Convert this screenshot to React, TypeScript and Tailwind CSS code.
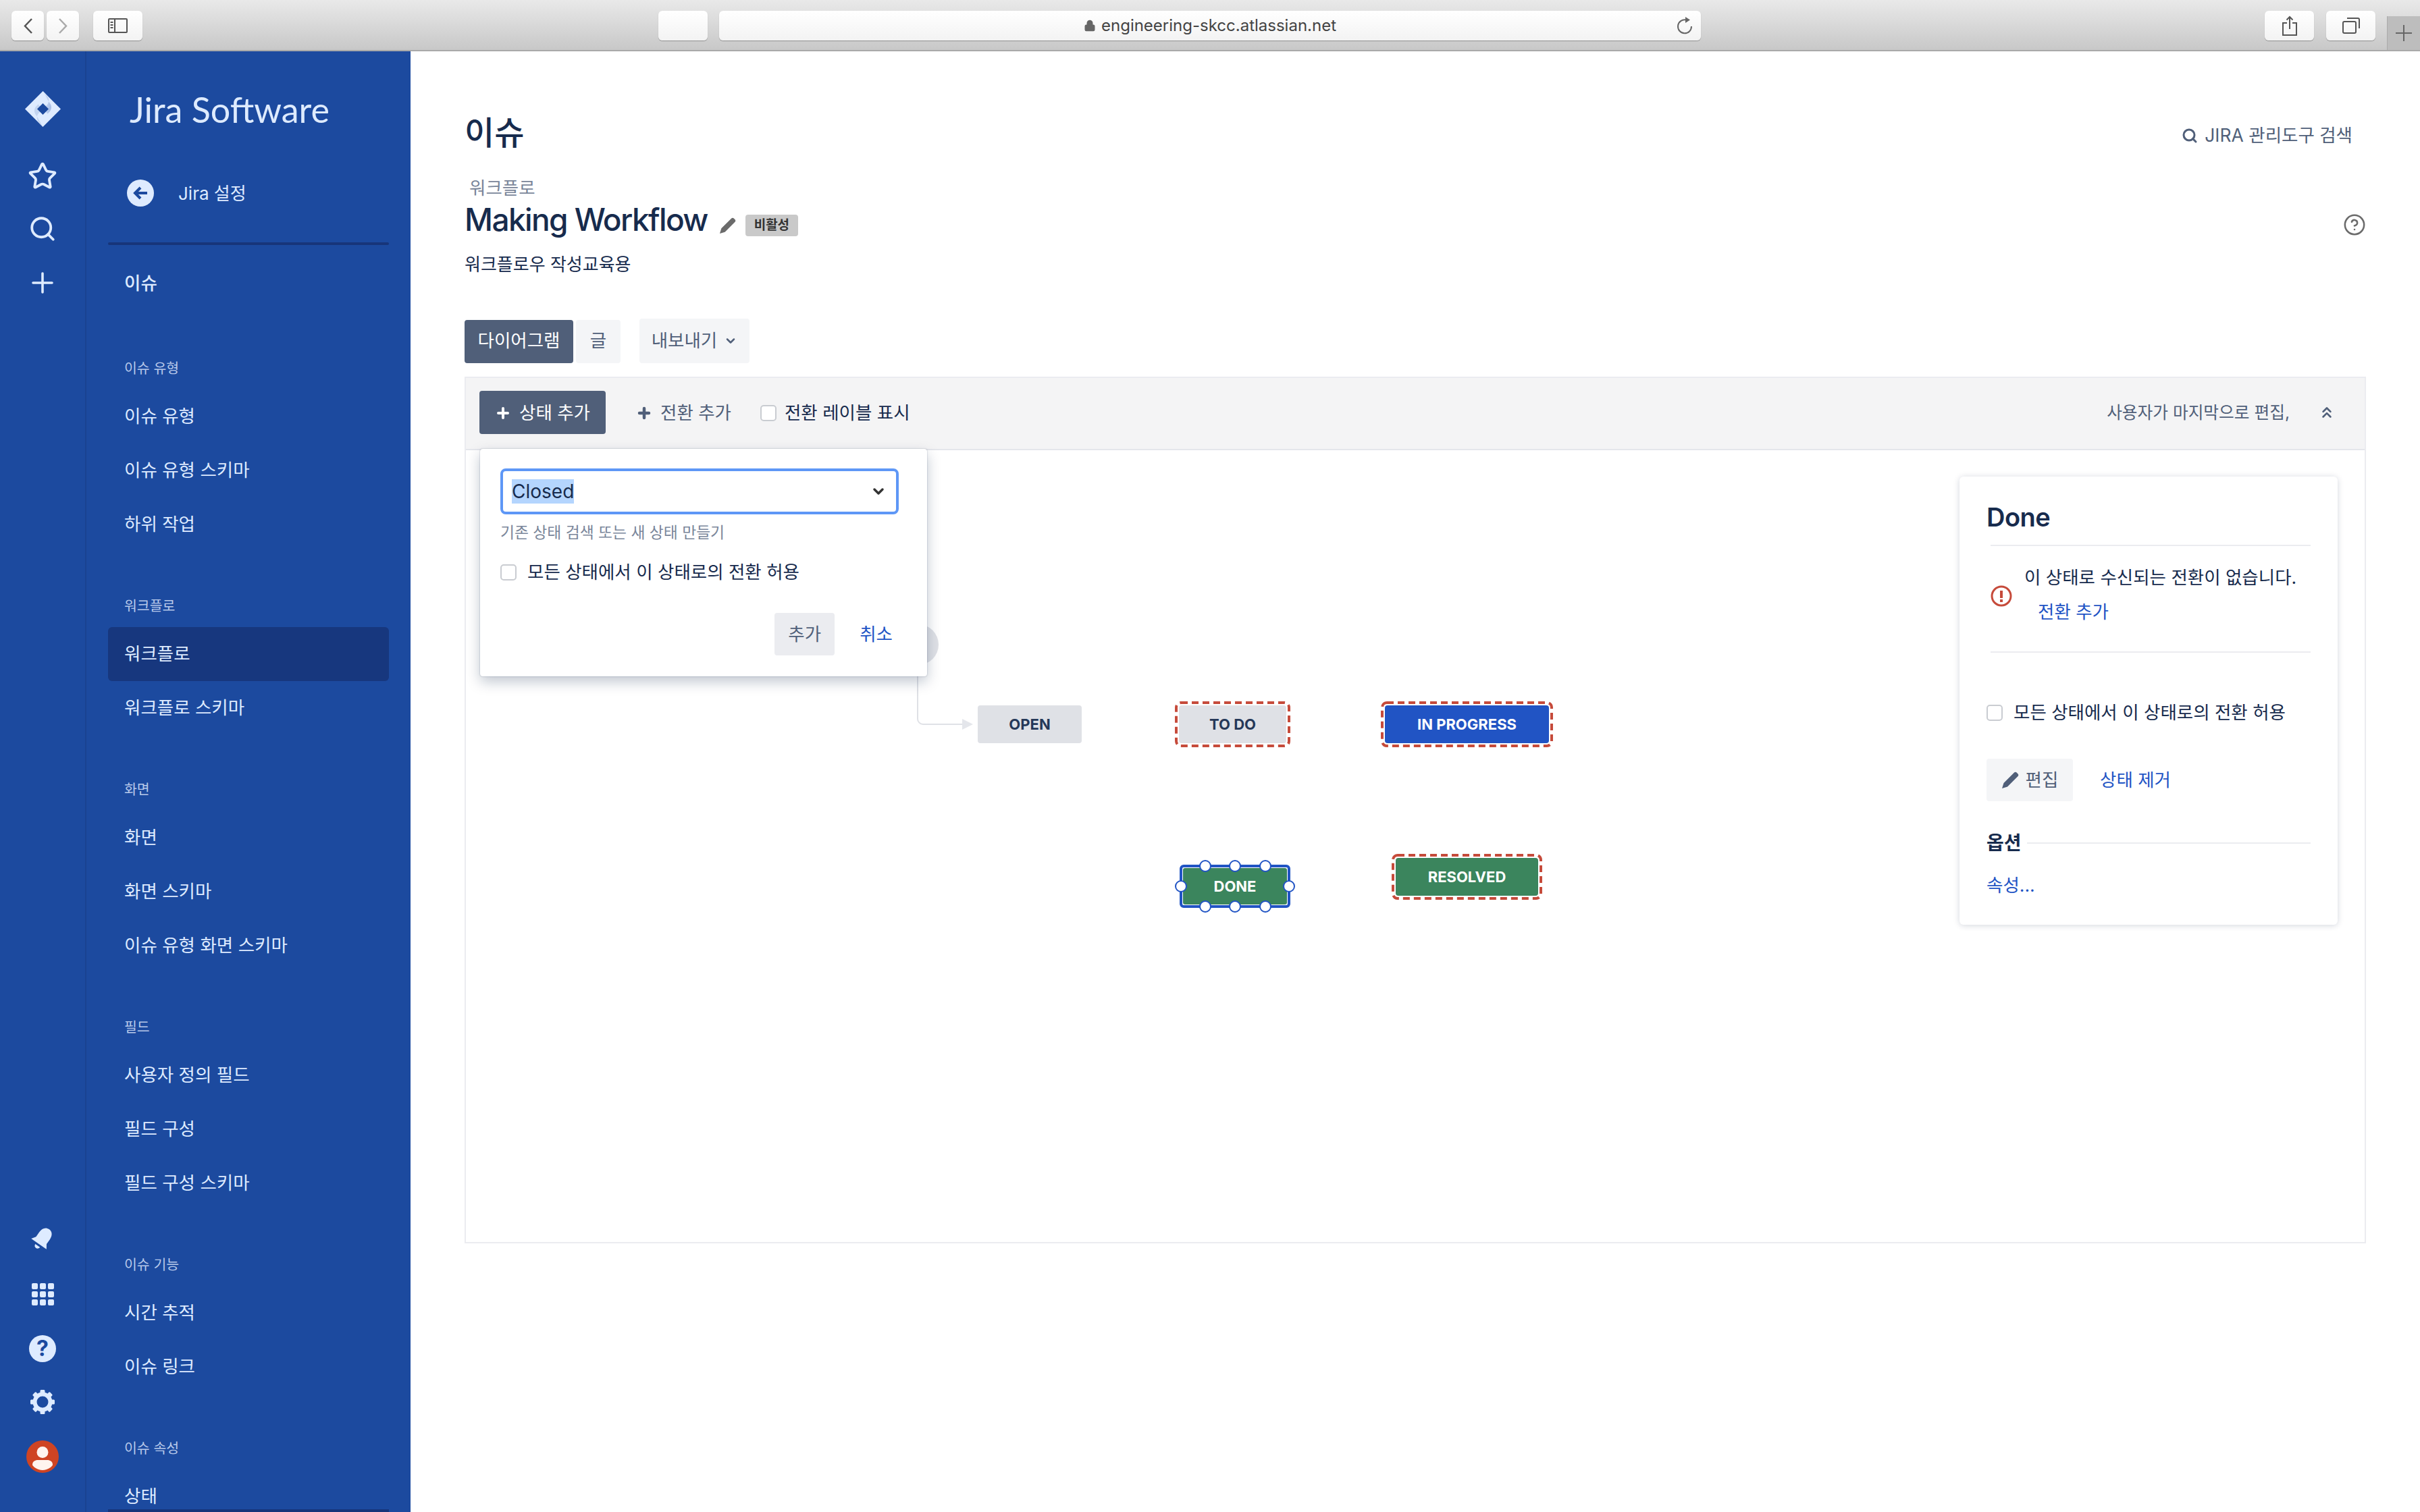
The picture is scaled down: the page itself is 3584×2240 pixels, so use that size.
import React from "react";
import { ChevronDown, ChevronsUp, Plus, Star, Search, HelpCircle, Lock } from "lucide-react";

const navSections = [
  { title: "이슈 유형", items: ["이슈 유형", "이슈 유형 스키마", "하위 작업"] },
  { title: "워크플로", items: ["워크플로", "워크플로 스키마"] },
  { title: "화면", items: ["화면", "화면 스키마", "이슈 유형 화면 스키마"] },
  { title: "필드", items: ["사용자 정의 필드", "필드 구성", "필드 구성 스키마"] },
  { title: "이슈 기능", items: ["시간 추적", "이슈 링크"] },
  { title: "이슈 속성", items: ["상태"] },
];

const Pencil = ({ className }: { className: string }) => (
  <svg viewBox="0 0 26 26" className={className} fill="currentColor">
    <path d="M19 1.500c1-1 2.600-1 3.600 0l1.900 1.900c1 1 1 2.600 0 3.600L9 22.500 1 25l2.500-8z" />
  </svg>
);

const Checkbox = () => (
  <span className="w-[24px] h-[24px] shrink-0 rounded-[5px] border-2 border-[#c9ccd1] bg-white" />
);

const ToolButton = ({ children }: { children: React.ReactNode }) => (
  <div className="h-[44px] rounded-[6px] bg-gradient-to-b from-white to-[#f3f3f3] shadow-[0_1px_1px_rgba(0,0,0,0.3)] flex items-center justify-center text-[#555]">
    {children}
  </div>
);

const BrowserBar = () => (
  <div className="relative h-[76px] shrink-0 flex pt-[16px] pl-[17px] bg-gradient-to-b from-[#e9e9e9] to-[#c8c8c8] border-b-2 border-[#a9a9a9]">
    <div className="w-[48px]">
      <ToolButton>
        <svg width="13" height="23" viewBox="0 0 13 23" fill="none" stroke="#555" strokeWidth="2.500">
          <path d="M12 1 2 11.500 12 22" />
        </svg>
      </ToolButton>
    </div>
    <div className="w-[48px] ml-[4px]">
      <ToolButton>
        <svg width="13" height="23" viewBox="0 0 13 23" fill="none" stroke="#aaa" strokeWidth="2.500">
          <path d="M1 1l10 10.500L1 22" />
        </svg>
      </ToolButton>
    </div>
    <div className="w-[73px] ml-[21px]">
      <ToolButton>
        <svg width="29" height="22" viewBox="0 0 29 22" fill="none" stroke="#555" strokeWidth="2">
          <rect x="1" y="1" width="27" height="20" rx="1" />
          <path d="M10 1v20" />
          <path d="M3.500 6h4M3.500 10h4M3.500 14h4" />
        </svg>
      </ToolButton>
    </div>
    <div className="w-[73px] ml-[764px]">
      <ToolButton>{null}</ToolButton>
    </div>
    <div className="w-[1454px] ml-[17px]">
      <ToolButton>
        <div className="relative w-full flex items-center justify-center gap-[8px] text-[24px] text-[#444]">
          <Lock className="w-[18px] h-[18px] text-[#666]" fill="#666" />
          <span>engineering-skcc.atlassian.net</span>
          <svg className="absolute right-[12px] top-1/2 -translate-y-1/2" width="24" height="28" viewBox="0 0 24 28" fill="none" stroke="#666" strokeWidth="2">
            <path d="M14 5.500A10 10 0 1 0 22 15" />
            <path d="M13 1l7 4.500-7 4.500z" fill="#666" stroke="none" />
          </svg>
        </div>
      </ToolButton>
    </div>
    <div className="w-[73px] ml-[835px]">
      <ToolButton>
        <svg width="22" height="30" viewBox="0 0 22 30" fill="none" stroke="#555" strokeWidth="2">
          <path d="M7 11H1v18h20V11h-6" />
          <path d="M11 20V2M6.500 6.500 11 2l4.500 4.500" />
        </svg>
      </ToolButton>
    </div>
    <div className="w-[73px] ml-[18px]">
      <ToolButton>
        <svg width="26" height="24" viewBox="0 0 26 24" fill="none" stroke="#555" strokeWidth="2">
          <rect x="1" y="6" width="19" height="17" rx="2" />
          <path d="M7 1h16a2 2 0 0 1 2 2v13" />
        </svg>
      </ToolButton>
    </div>
    <div className="absolute right-0 top-[24px] w-[49px] h-[50px] bg-[#bdbdbd] border-l border-[#aaa] flex items-center justify-center">
      <svg width="24" height="24" viewBox="0 0 24 24" stroke="#666" strokeWidth="2">
        <path d="M12 0v24M0 12h24" />
      </svg>
    </div>
  </div>
);

const Rail = () => (
  <div className="w-[128px] shrink-0 border-r-2 border-[#1a4391] flex flex-col items-center pt-[59px] pb-[58px] text-[#deebff]">
    <svg width="53" height="53" viewBox="0 0 53 53">
      <defs>
        <linearGradient id="jiraLobe" x1="0" y1="0" x2="1" y2="0.300">
          <stop offset="0" stopColor="#deebff" />
          <stop offset="1" stopColor="#a9bfe6" />
        </linearGradient>
      </defs>
      <path d="M26.500 0 53 26.500 26.500 53 0 26.500z" fill="#deebff" />
      <path d="M26.500 0 30 3.500c5 5 7 11 3.500 16L26.500 26.500 33.500 33.500l3-3c4-5 3-10-1-14.500z" fill="url(#jiraLobe)" />
      <path d="M26.500 53 23 49.500c-5-5-7-11-3.500-16l7-7-7-7-3 3c-4 5-3 10 1 14.500z" fill="#c3d4f0" />
      <path d="M26.500 18 35 26.500 26.500 35 18 26.500z" fill="#1c4a9f" />
    </svg>
    <Star className="w-[44px] h-[44px] mt-[51px]" strokeWidth={2.100} />
    <Search className="w-[42px] h-[42px] mt-[35px]" strokeWidth={2.200} />
    <Plus className="w-[48px] h-[48px] mt-[35px]" strokeWidth={1.800} />
    <svg className="mt-auto rotate-[35deg]" width="36" height="36" viewBox="0 0 34 34" fill="#deebff">
      <path d="M17 1c6 0 9 5 9 11v8l4 6H4l4-6v-8C8 6 11 1 17 1z" />
      <path d="M13 29h8a4 4 0 0 1-8 0z" />
    </svg>
    <div className="grid grid-cols-3 gap-[3px] mt-[48px] mb-[-2px]">
      {Array.from({ length: 9 }).map((_, i) => (
        <span key={i} className="w-[9px] h-[9px] rounded-[2px] bg-[#deebff]" />
      ))}
    </div>
    <div className="w-[40px] h-[40px] mt-[46px] rounded-full bg-[#deebff] flex items-center justify-center text-[32px] font-bold leading-none text-[#1c4a9f]">
      ?
    </div>
    <svg className="mt-[41px]" width="36" height="36" viewBox="0 0 36 36" fill="#deebff">
      {[0, 45, 90, 135, 180, 225, 270, 315].map((a) => (
        <rect key={a} x="14.500" y="0" width="7" height="8" rx="1.500" transform={`rotate(${a} 18 18)`} />
      ))}
      <circle cx="18" cy="18" r="11.500" fill="none" stroke="#deebff" strokeWidth="6" />
    </svg>
    <svg className="mt-[39px]" width="48" height="48" viewBox="0 0 48 48">
      <circle cx="24" cy="24" r="24" fill="#cf4423" />
      <circle cx="24" cy="17.500" r="8.500" fill="#fff4ef" />
      <path d="M9 36c0-5 4-7 8-7h14c4 0 8 2 8 7 0 2-7 8-15 8S9 38 9 36z" fill="#fff4ef" />
    </svg>
  </div>
);

const Nav = () => (
  <div className="relative flex-1 px-[32px] overflow-hidden text-[#deebff]">
    <div className="h-[75px] mt-[48px] pl-[32px] flex items-center font-[family-name:Lato,sans-serif] text-[52px] leading-none">
      Jira Software
    </div>
    <div className="h-[40px] mt-[67px] pl-[28px] flex items-center">
      <span className="w-[40px] h-[40px] rounded-full bg-[#deebff] flex items-center justify-center">
        <svg width="22" height="20" viewBox="0 0 22 20" fill="none" stroke="#1c4a9f" strokeWidth="4">
          <path d="M21 10H5M11 2 3 10l8 8" />
        </svg>
      </span>
      <span className="ml-[36px] text-[26px]">Jira 설정</span>
    </div>
    <div className="h-[4px] mt-[53px] rounded-full bg-[#17357a]" />
    <div className="h-[80px] mt-[17px] px-[24px] flex items-center text-[26.500px] font-medium">이슈</div>
    <div className="h-[5px]" />
    {navSections.map((section) => (
      <div key={section.title}>
        <div className="h-[112px] px-[24px] pb-[21px] flex items-end text-[20.500px] leading-[20px] text-[#b8c9ea]">
          {section.title}
        </div>
        {section.items.map((item) => (
          <div
            key={item}
            className={
              item === "워크플로"
                ? "h-[80px] px-[24px] flex items-center text-[26.500px] rounded-[6px] bg-[#17377e]"
                : "h-[80px] px-[24px] flex items-center text-[26.500px]"
            }
          >
            {item}
          </div>
        ))}
      </div>
    ))}
    <div className="absolute left-[32px] right-[32px] bottom-0 h-[4px] bg-[#17357a]" />
  </div>
);

const StatusNode = ({
  label,
  className,
  fill,
  width,
  height,
  dashed,
}: {
  label: string;
  className: string;
  fill: string;
  width: number;
  height: number;
  dashed?: boolean;
}) => (
  <div className={`absolute p-[6px] ${className}`} style={{ width, height }}>
    {dashed && (
      <svg className="absolute inset-0" width={width} height={height} fill="none">
        <rect x="2" y="2" width={width - 4} height={height - 4} rx="7" stroke="#c64b3b" strokeWidth="4" strokeDasharray="10 6" />
      </svg>
    )}
    <div className={`w-full h-full rounded-[4px] flex items-center justify-center text-[22px] font-bold ${fill}`}>
      {label}
    </div>
  </div>
);

const Handle = ({ className }: { className: string }) => (
  <span className={`absolute w-[18px] h-[18px] -ml-[9px] -mt-[9px] rounded-full bg-white border-2 border-[#2154c4] ${className}`} />
);

const AddStatusPopup = () => (
  <div className="absolute left-[21px] top-[-2px] w-[662px] h-[337px] z-10 bg-white rounded-[4px] pl-[30px] pt-[29px] pr-[42px] shadow-[0_8px_20px_rgba(9,30,66,0.25),0_0_2px_rgba(9,30,66,0.35)]">
    <div className="h-[68px] w-[590px] border-4 border-[#5e97f6] rounded-[8px] pl-[13px] pr-[14px] flex items-center justify-between">
      <span className="bg-[#b4d5fe] h-[36px] flex items-center text-[28px] text-[#172b4d] leading-none">Closed</span>
      <ChevronDown className="w-[24px] h-[24px] text-[#333]" strokeWidth={3.500} />
    </div>
    <div className="h-[32px] mt-[11px] flex items-center text-[22.800px] text-[#7a869a]">기존 상태 검색 또는 새 상태 만들기</div>
    <div className="h-[36px] mt-[25px] flex items-center gap-[16px] text-[26.500px] text-[#172b4d]">
      <Checkbox />
      모든 상태에서 이 상태로의 전환 허용
    </div>
    <div className="flex justify-end items-center mt-[42px] text-[26.500px]">
      <span className="w-[89px] h-[63px] rounded-[4px] bg-[#ebecf0] text-[#505f79] flex items-center justify-center">추가</span>
      <span className="ml-[37px] mr-[9px] text-[#1f55c5]">취소</span>
    </div>
  </div>
);

const DonePanel = () => (
  <div className="absolute left-[2212px] top-[39px] w-[560px] h-[664px] bg-white rounded-[6px] pl-[40px] pr-[40px] pt-[35px] text-[#172b4d] shadow-[0_1px_10px_rgba(9,30,66,0.18)]">
    <div className="text-[38px] font-semibold leading-[50px] tracking-[-0.5px]">Done</div>
    <div className="h-[2px] ml-[6px] mt-[16px] bg-[#ebecf0]" />
    <div className="flex h-[156px] ml-[6px] items-center">
      <svg className="shrink-0 mb-[8px]" width="32" height="32" viewBox="0 0 32 32" fill="none">
        <circle cx="16" cy="16" r="14" stroke="#c64b3b" strokeWidth="3" />
        <path d="M14 8h4v11h-4zM14 21h4v4h-4z" fill="#c64b3b" />
      </svg>
      <div className="ml-[18px] text-[26.500px] whitespace-nowrap">
        <div className="leading-[36px] -mt-[14px]">이 상태로 수신되는 전환이 없습니다.</div>
        <div className="leading-[36px] mt-[15px] ml-[20px] text-[#1f55c5]">전환 추가</div>
      </div>
    </div>
    <div className="h-[2px] ml-[6px] bg-[#ebecf0]" />
    <div className="flex items-center gap-[16px] mt-[71px] h-[36px] text-[26.500px]">
      <Checkbox />
      모든 상태에서 이 상태로의 전환 허용
    </div>
    <div className="flex items-center mt-[50px]">
      <span className="w-[128px] h-[63px] rounded-[4px] bg-[#f4f5f7] text-[#505f79] flex items-center justify-center gap-[10px] text-[26.500px]">
        <Pencil className="w-[26px] h-[26px]" />
        편집
      </span>
      <span className="ml-[40px] text-[26.500px] text-[#1f55c5]">상태 제거</span>
    </div>
    <div className="flex items-center mt-[40px] h-[44px]">
      <span className="text-[28px] font-bold">옵션</span>
      <span className="flex-1 h-[2px] ml-[8px] bg-[#ebecf0]" />
    </div>
    <div className="mt-[22px] text-[26.500px] leading-[36px] text-[#1f55c5]">속성...</div>
  </div>
);

const Diagram = () => (
  <div className="relative flex-1">
    <svg className="absolute left-0 top-0" width="800" height="440" fill="none">
      <circle cx="670" cy="288" r="30" fill="#dfe1e6" />
      <path d="M669 316v82a8 8 0 0 0 8 8h58" stroke="#dfe1e6" strokeWidth="2" />
      <path d="M735 398l16 8-16 8z" fill="#e4e6eb" />
    </svg>
    <StatusNode label="OPEN" className="left-[752px] top-[372px]" fill="bg-[#dfe1e6] text-[#253858]" width={166} height={68} />
    <StatusNode label="TO DO" className="left-[1050px] top-[372px]" fill="bg-[#dfe1e6] text-[#253858]" width={171} height={68} dashed />
    <StatusNode label="IN PROGRESS" className="left-[1355px] top-[372px]" fill="bg-[#2154c4] text-white" width={255} height={68} dashed />
    <StatusNode label="RESOLVED" className="left-[1371px] top-[598px]" fill="bg-[#3b855d] text-white" width={223} height={68} dashed />
    <div className="absolute left-[1057px] top-[614px] w-[164px] h-[64px] rounded-[6px] border-4 border-[#2154c4] p-[1px]">
      <div className="w-full h-full rounded-[3px] bg-[#3b855d] text-white text-[22px] font-bold flex items-center justify-center">DONE</div>
      <Handle className="left-[34px] top-[-2px]" />
      <Handle className="left-[78px] top-[-2px]" />
      <Handle className="left-[123px] top-[-2px]" />
      <Handle className="left-[34px] top-[58px]" />
      <Handle className="left-[78px] top-[58px]" />
      <Handle className="left-[123px] top-[58px]" />
      <Handle className="left-[-2px] top-[28px]" />
      <Handle className="left-[158px] top-[28px]" />
    </div>
    <AddStatusPopup />
    <DonePanel />
  </div>
);

const Content = () => (
  <div className="flex-1 pl-[80px] pr-[80px] text-[#172b4d]">
    <div className="flex justify-between mt-[86px] h-[68px]">
      <h1 className="text-[48px] leading-[70px] font-medium">이슈</h1>
      <div className="flex items-center mt-[10px] pr-[20px] gap-[10px] text-[26.500px] text-[#505f79]">
        <Search className="w-[24px] h-[24px]" strokeWidth={3} />
        JIRA 관리도구 검색
      </div>
    </div>
    <div className="h-[32px] mt-[33px] pl-[7px] flex items-center text-[26.500px] text-[#7a869a]">워크플로</div>
    <div className="flex items-center h-[60px]">
      <span className="text-[46px] font-medium leading-[60px] tracking-[-1.600px]">Making Workflow</span>
      <Pencil className="w-[25px] h-[25px] ml-[17px] mt-[18px] text-[#6b6b6b]" />
      <span className="w-[78px] h-[32px] ml-[14px] mt-[18px] rounded-[4px] bg-[#c9c9c9] text-[19px] font-bold text-[#333] flex items-center justify-center">비활성</span>
      <HelpCircle className="w-[34px] h-[34px] ml-auto mt-[16px] text-[#6b6b6b]" strokeWidth={1.800} />
    </div>
    <div className="h-[36px] mt-[18px] flex items-center text-[26px]">워크플로우 작성교육용</div>
    <div className="flex mt-[65px] h-[64px] text-[26.500px] leading-none">
      <span className="w-[161px] pb-[3px] rounded-[4px] bg-[#505f79] text-white flex items-center justify-center">다이어그램</span>
      <span className="w-[66px] pb-[3px] ml-[4px] rounded-[4px] bg-[#f4f5f7] text-[#505f79] flex items-center justify-center">글</span>
      <span className="w-[163px] pb-[1px] ml-[28px] -mt-[2px] rounded-[4px] bg-[#f4f5f7] text-[#505f79] flex items-center justify-center gap-[10px]">
        내보내기
        <ChevronDown className="w-[20px] h-[20px]" strokeWidth={3} />
      </span>
    </div>
    <div className="flex flex-col h-[1284px] mt-[20px] border-2 border-[#ebecf0]">
      <div className="h-[107px] shrink-0 pb-[3px] pl-[20px] pr-[40px] flex items-center bg-[#f4f4f5] border-b-2 border-[#e4e6eb] text-[26.500px]">
        <span className="w-[187px] h-[64px] pt-[1px] rounded-[4px] bg-[#505f79] text-white flex items-center justify-center gap-[12px]">
          <Plus className="w-[24px] h-[24px]" strokeWidth={4} />
          상태 추가
        </span>
        <span className="ml-[45px] mt-[2px] flex items-center gap-[12px] text-[#505f79]">
          <Plus className="w-[24px] h-[24px]" strokeWidth={4.500} />
          전환 추가
        </span>
        <span className="ml-[43px] mt-[2px] flex items-center gap-[12px] text-[#172b4d]">
          <Checkbox />
          전환 레이블 표시
        </span>
        <span className="ml-auto mt-[2px] text-[24.700px] text-[#505f79]">사용자가 마지막으로 편집,</span>
        <ChevronsUp className="w-[26px] h-[26px] ml-[42px] mr-[3px] text-[#505f79]" strokeWidth={2.500} />
      </div>
      <Diagram />
    </div>
  </div>
);

const App = () => {
  return (
    <div className="w-[3584px] h-[2240px] flex flex-col overflow-hidden bg-white font-[family-name:Inter,'Noto_Sans_CJK_KR',sans-serif]">
      <BrowserBar />
      <div className="flex flex-1 min-h-0">
        <div className="w-[608px] shrink-0 flex bg-[#1c4a9f]">
          <Rail />
          <Nav />
        </div>
        <Content />
      </div>
    </div>
  );
};

export default App;
